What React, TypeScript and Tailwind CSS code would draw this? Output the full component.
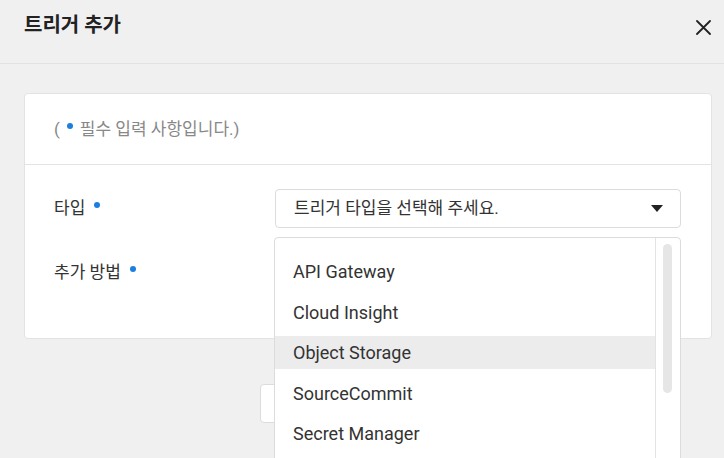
import React from "react";

const TRIGGER_TYPES = [
  "API Gateway",
  "Cloud Insight",
  "Object Storage",
  "SourceCommit",
  "Secret Manager",
  "Cron",
];

const FONT = "font-['Roboto','Noto_Sans_CJK_KR',sans-serif]";

function RequiredDot() {
  return <span className="ml-[9px] mb-[8px] inline-block h-[6px] w-[6px] rounded-full bg-[#1a7fe0]" />;
}

export default function App() {
  const hovered = "Object Storage";

  return (
    <div className={`relative h-[458px] w-[724px] overflow-hidden bg-[#f0f0f0] text-[#333] ${FONT}`}>
      {/* Modal header */}
      <div className="flex h-[64px] items-start justify-between border-b border-[#e2e2e2] pl-6 pr-3 pt-[10px]">
        <h1 className="text-[20px] font-bold leading-[30px] text-[#222]">트리거 추가</h1>
        <button className="mr-[1px] mt-[10px]" aria-label="닫기">
          <svg width="15" height="15" viewBox="0 0 15 15">
            <path d="M1 1L14 14M14 1L1 14" stroke="#222" strokeWidth="1.8" strokeLinecap="round" />
          </svg>
        </button>
      </div>

      {/* Form card */}
      <div className="ml-6 mr-3 mt-[29px] rounded border border-[#e3e3e3] bg-white">
        <div className="flex h-[71px] items-center border-b border-[#e3e3e3] pl-[29px] pt-[1px] text-[17px] text-[#888]">
          <span>(</span>
          <span className="mb-[8px] ml-[7px] mr-[7px] inline-block h-[6px] w-[6px] rounded-full bg-[#1a7fe0]" />
          <span>필수 입력 사항입니다.)</span>
        </div>

        <div className="pb-[46px] pl-[29px] pr-[30px] pt-[24px]">
          <div className="flex items-center">
            <div className="flex w-[221px] items-center text-[17px]">
              타입
              <RequiredDot />
            </div>
            <div className="relative flex-1">
              <div className="flex h-[39px] items-center justify-between rounded border border-[#dcdcdc] pl-[18px] pr-[17px] text-[17px]">
                <span>트리거 타입을 선택해 주세요.</span>
                <svg width="12" height="7" viewBox="0 0 12 7">
                  <path d="M0 0H12L6 7Z" fill="#222" />
                </svg>
              </div>

              {/* Open option list */}
              <div className="absolute left-[-1px] top-[48px] z-10 flex h-[240px] w-[407px] overflow-hidden rounded border border-[#dcdcdc] bg-white">
                <ul className="flex flex-1 flex-col gap-[7.5px] pt-[17px]">
                  {TRIGGER_TYPES.map((t) => (
                    <li
                      key={t}
                      className={`flex h-[33px] shrink-0 items-center pl-[18px] text-[18px] ${
                        t === hovered ? "bg-[#ececec]" : ""
                      }`}
                    >
                      {t}
                    </li>
                  ))}
                </ul>
                <div className="w-[25px] border-l border-[#e3e3e3]">
                  <div className="ml-[7px] mt-[6px] h-[149px] w-[9px] rounded-full bg-[#e6e6e6]" />
                </div>
              </div>
            </div>
          </div>

          <div className="mt-[26px] flex h-[38px] items-center">
            <div className="flex w-[221px] items-center text-[17px]">
              추가 방법
              <RequiredDot />
            </div>
          </div>
        </div>
      </div>

      {/* Footer actions */}
      <div className="mt-[45px] flex justify-center gap-2">
        <button className="h-[39px] w-[98px] rounded border border-[#dcdcdc] bg-white text-[15px]">취소</button>
        <button className="h-[39px] w-[98px] rounded bg-[#1a7fe0] text-[15px] text-white">추가</button>
      </div>
    </div>
  );
}
